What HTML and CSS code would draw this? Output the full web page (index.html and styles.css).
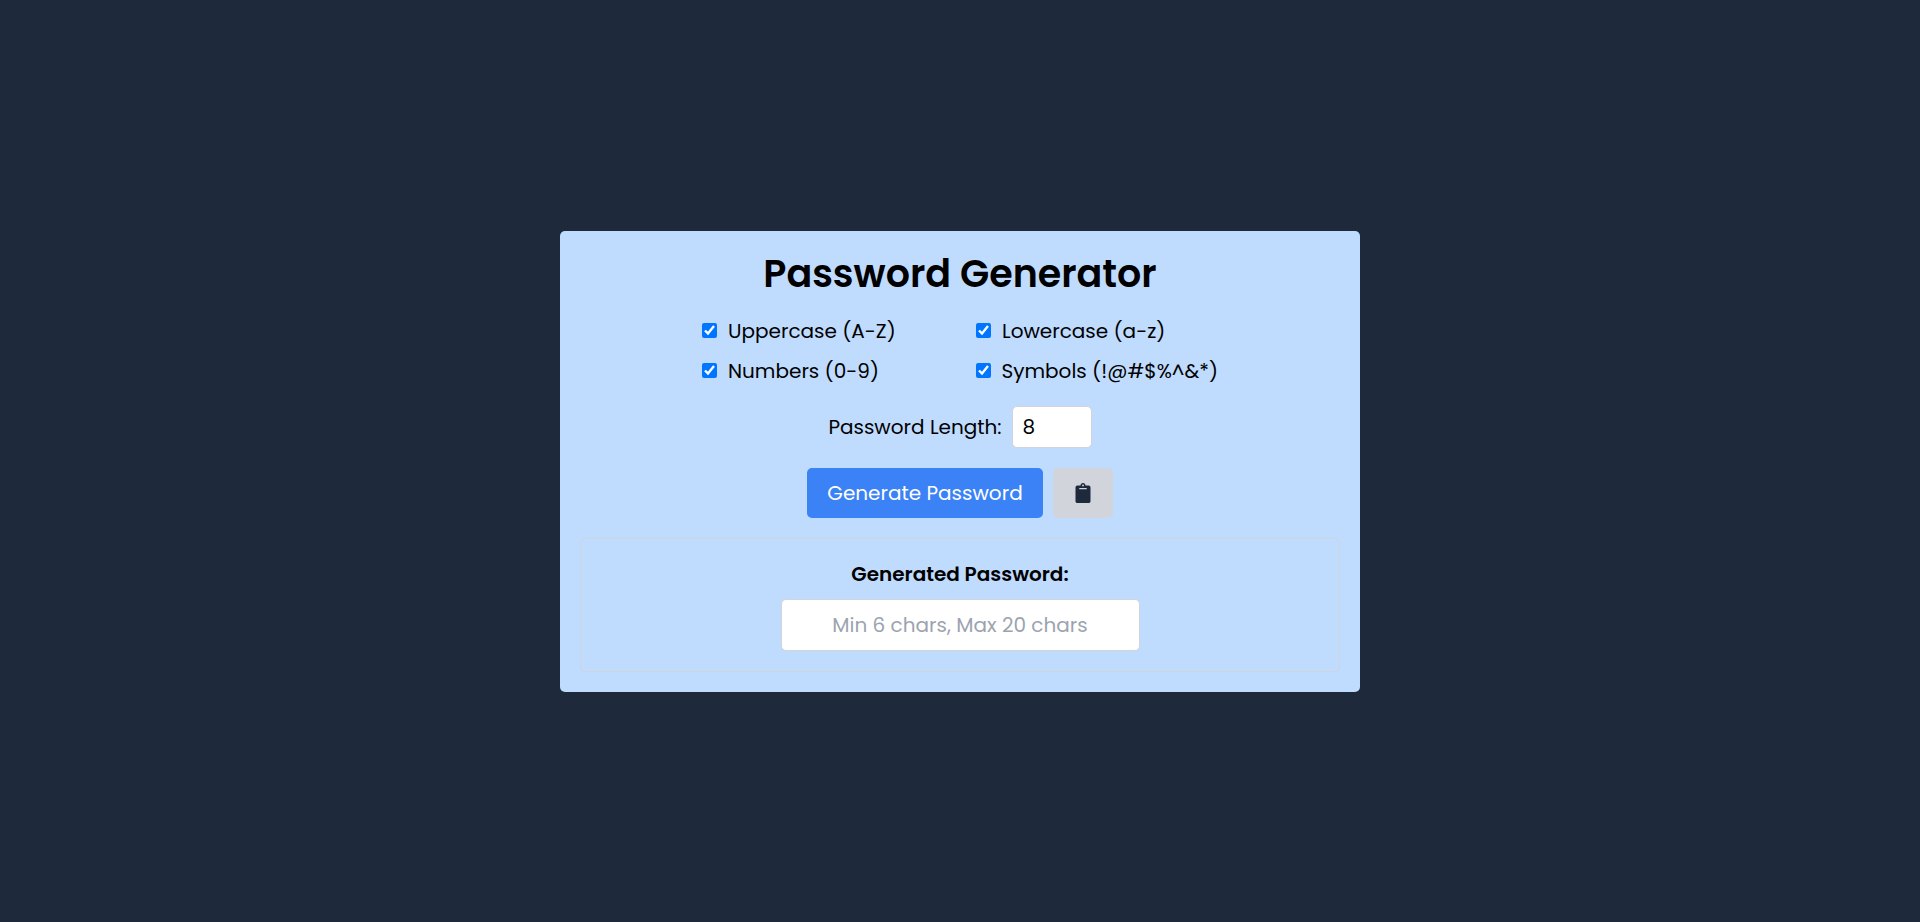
FILE: index.html
```html
<!DOCTYPE html>
<html lang="en">
<head>
  <meta charset="utf-8">
  <meta name="viewport" content="width=device-width, initial-scale=1">
  <title>Password Generator</title>
  <link rel="stylesheet" href="styles.css">
</head>
<body>
  <main class="card">
    <h1 class="title">Password Generator</h1>

    <div class="options">
      <label class="option"><input class="check" type="checkbox" checked><span>Uppercase (A-Z)</span></label>
      <label class="option"><input class="check" type="checkbox" checked><span>Lowercase (a-z)</span></label>
      <label class="option"><input class="check" type="checkbox" checked><span>Numbers (0-9)</span></label>
      <label class="option"><input class="check" type="checkbox" checked><span>Symbols (!@#$%^&amp;*)</span></label>
    </div>

    <div class="row">
      <label for="length">Password Length:</label>
      <input class="field length" id="length" type="number" min="6" max="20" value="8">
    </div>

    <div class="row">
      <button class="button primary" type="button">Generate Password</button>
      <button class="button copy" type="button" aria-label="Copy password">
        <svg class="icon" viewBox="0 0 384 512" fill="currentColor" aria-hidden="true">
          <path d="M384 112v352c0 26.51-21.49 48-48 48H48c-26.51 0-48-21.49-48-48V112c0-26.51 21.49-48 48-48h80c0-35.29 28.71-64 64-64s64 28.71 64 64h80c26.51 0 48 21.49 48 48zM192 40c-13.255 0-24 10.745-24 24s10.745 24 24 24 24-10.745 24-24-10.745-24-24-24m96 114v-20a6 6 0 0 0-6-6H102a6 6 0 0 0-6 6v20a6 6 0 0 0 6 6h180a6 6 0 0 0 6-6z"/>
        </svg>
      </button>
    </div>

    <section class="result">
      <label class="result-label" for="password">Generated Password:</label>
      <input class="field password" id="password" type="text" placeholder="Min 6 chars, Max 20 chars" readonly>
    </section>
  </main>
</body>
</html>
```

FILE: styles.css
```css
* {
  box-sizing: border-box;
}

body {
  margin: 0;
  min-height: 100vh;
  display: flex;
  align-items: center;
  justify-content: center;
  background: #1e293b;
  color: #000;
  font-family: Poppins, Inter, sans-serif;
  font-size: 20px;
  font-weight: 400;
  line-height: 30px;
}

.card {
  width: 100%;
  max-width: 800px;
  padding: 20px;
  display: flex;
  flex-direction: column;
  gap: 20px;
  border-radius: 5px;
  background: #bfdbfe;
}

.title {
  margin: 0;
  font-size: 38px;
  font-weight: 600;
  line-height: 45px;
  text-align: center;
}

.options {
  display: grid;
  grid-template-columns: repeat(2, minmax(0, 242px));
  justify-content: center;
  gap: 10px 32px;
}

.option {
  display: flex;
  align-items: center;
  gap: 11px;
  white-space: nowrap;
}

.check {
  width: 15px;
  height: 15px;
  margin: 0;
}

.row {
  display: flex;
  align-items: center;
  justify-content: center;
  gap: 10px;
}

.field {
  border: 1px solid #d1d5db;
  border-radius: 5px;
  background: #fff;
  color: #000;
  font: inherit;
}

.length {
  width: 80px;
  padding: 5px 10px;
}

.button {
  padding: 10px 20px;
  border: 0;
  border-radius: 5px;
  font: inherit;
  cursor: pointer;
}

.primary {
  background: #3b82f6;
  color: #fff;
}

.copy {
  height: 50px;
  display: flex;
  align-items: center;
  background: #d1d5db;
  color: #1e293b;
}

.icon {
  width: 20px;
  height: 20px;
}

.result {
  padding: 20px;
  display: flex;
  flex-direction: column;
  align-items: center;
  gap: 10px;
  border: 1px solid #d1d5db;
  border-radius: 5px;
}

.result-label {
  font-weight: 600;
}

.password {
  width: 100%;
  max-width: 359px;
  padding: 10px;
  text-align: center;
}

.password::placeholder {
  color: #9ca3af;
  opacity: 1;
}
```
